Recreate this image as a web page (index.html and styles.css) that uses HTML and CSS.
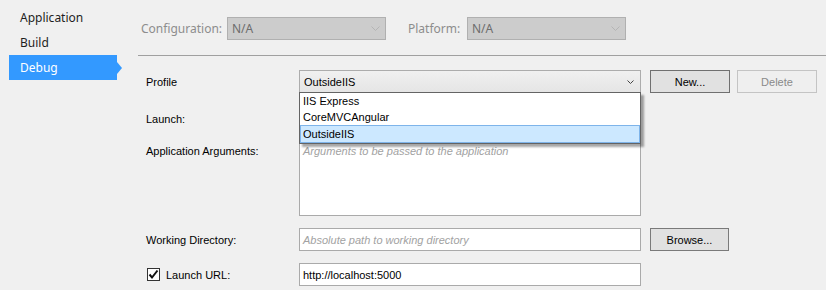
FILE: index.html
```html
<!DOCTYPE html>
<html lang="en">
<head>
    <meta charset="UTF-8">
    <title>Debug</title>
    <link rel="stylesheet" href="styles.css">
</head>
<body>
    <div class="page">
        <nav class="side">
            <div class="side-item">Application</div>
            <div class="side-item">Build</div>
            <div class="side-item active">Debug</div>
        </nav>

        <main class="main">
            <div class="toolbar">
                <span class="tool-label">Configuration:</span>
                <div class="tool-combo">
                    <span>N/A</span>
                    <svg width="9" height="5" viewBox="0 0 9 5"><polyline points="0.5,0.5 4.5,4.5 8.5,0.5" fill="none" stroke="#b4b4b4" stroke-width="1"/></svg>
                </div>
                <span class="tool-label platform">Platform:</span>
                <div class="tool-combo">
                    <span>N/A</span>
                    <svg width="9" height="5" viewBox="0 0 9 5"><polyline points="0.5,0.5 4.5,4.5 8.5,0.5" fill="none" stroke="#b4b4b4" stroke-width="1"/></svg>
                </div>
            </div>
            <div class="separator"></div>

            <div class="form">
                <div class="row row-profile">
                    <label class="label">Profile</label>
                    <div class="combo-wrap">
                        <div class="combo">
                            <span>OutsideIIS</span>
                            <svg width="7" height="4" viewBox="0 0 7 4"><polyline points="0.5,0.5 3.5,3.5 6.5,0.5" fill="none" stroke="#444" stroke-width="1"/></svg>
                        </div>
                        <ul class="dropdown">
                            <li>IIS Express</li>
                            <li>CoreMVCAngular</li>
                            <li class="selected">OutsideIIS</li>
                        </ul>
                    </div>
                    <button class="btn btn-default">New...</button>
                    <button class="btn btn-disabled">Delete</button>
                </div>

                <div class="row row-launch">
                    <label class="label">Launch:</label>
                    <div class="combo"></div>
                </div>

                <div class="row row-args">
                    <label class="label">Application Arguments:</label>
                    <div class="textarea"><span class="placeholder">Arguments to be passed to the application</span></div>
                </div>

                <div class="row row-dir">
                    <label class="label">Working Directory:</label>
                    <div class="input"><span class="placeholder">Absolute path to working directory</span></div>
                    <button class="btn btn-browse">Browse...</button>
                </div>

                <div class="row row-url">
                    <label class="label check-label">
                        <span class="checkbox">
                            <svg width="11" height="11" viewBox="0 0 11 11"><polyline points="1.5,5.5 4,8.5 9.5,1.5" fill="none" stroke="#111" stroke-width="2"/></svg>
                        </span>
                        Launch URL:
                    </label>
                    <div class="input"><span>http://localhost:5000</span></div>
                </div>
            </div>
        </main>
    </div>
</body>
</html>
```

FILE: styles.css
```css
* {
    margin: 0;
    padding: 0;
    box-sizing: border-box;
}
body {
    background-color: #f0f0f0;
    font-family: 'Liberation Sans', Arial, sans-serif;
    font-size: 11px;
    color: #000;
    overflow: hidden;
}
.page {
    display: flex;
    width: 826px;
    height: 290px;
}

/* left navigation */
.side {
    width: 130px;
    padding: 5px 0 0 9px;
    font-family: 'Noto Sans', 'Open Sans', sans-serif;
    font-size: 12px;
}
.side-item {
    position: relative;
    width: 108px;
    height: 25px;
    line-height: 25px;
    padding-left: 11px;
    color: #1e1e1e;
}
.side-item.active {
    background-color: #3399ff;
    color: #fff;
}
.side-item.active::after {
    content: '';
    position: absolute;
    right: -5px;
    top: 7px;
    border-left: 5px solid #3399ff;
    border-top: 6px solid transparent;
    border-bottom: 6px solid transparent;
}

/* main panel */
.main {
    flex: 1;
}
.toolbar {
    display: flex;
    align-items: flex-start;
    padding: 17px 0 0 11px;
    height: 55px;
    font-family: 'Noto Sans', 'Open Sans', sans-serif;
    font-size: 12px;
}
.tool-label {
    color: #8d8d8d;
    width: 86px;
    line-height: 23px;
}
.tool-label.platform {
    width: 59px;
    margin-left: 22px;
}
.tool-combo {
    display: flex;
    align-items: center;
    justify-content: space-between;
    width: 159px;
    height: 23px;
    padding: 0 5px 0 4px;
    background-color: #cccccc;
    border: 1px solid #b0b0b0;
    color: #6d6d6d;
}
.separator {
    margin-left: 8px;
    border-top: 1px solid #a0a0a0;
}

.form {
    padding-left: 16px;
}
.row {
    display: flex;
    align-items: center;
}
.label {
    width: 153px;
    flex-shrink: 0;
}
.row-profile {
    margin-top: 14px;
}
.row-launch {
    margin-top: 14px;
}
.row-args {
    margin-top: 13px;
    align-items: flex-start;
}
.row-args .label {
    padding-top: 2px;
}
.row-dir {
    margin-top: 12px;
}
.row-url {
    margin-top: 12px;
}

.combo-wrap {
    position: relative;
}
.combo {
    display: flex;
    align-items: center;
    justify-content: space-between;
    width: 342px;
    height: 23px;
    padding: 0 6px 0 4px;
    border: 1px solid #acacac;
    background: linear-gradient(#f0f0f0, #e5e5e5);
}
.dropdown {
    position: absolute;
    left: 0;
    top: 22px;
    width: 342px;
    list-style: none;
    background-color: #fff;
    border: 1px solid #646464;
    box-shadow: 3px 3px 2px rgba(0, 0, 0, 0.35);
    z-index: 2;
}
.dropdown li {
    height: 16px;
    line-height: 16px;
    padding-left: 3px;
}
.dropdown li.selected {
    height: 18px;
    line-height: 16px;
    padding-left: 2px;
    background-color: #cce8ff;
    border: 1px solid #7eb4ea;
}

.btn {
    width: 80px;
    height: 23px;
    font-family: 'Liberation Sans', Arial, sans-serif;
    font-size: 11px;
    background-color: #e1e1e1;
    border: 1px solid #adadad;
    color: #000;
}
.btn-default {
    margin-left: 9px;
    border-color: #707070;
}
.btn-disabled {
    margin-left: 7px;
    background-color: #efefef;
    border-color: #c4c4c4;
    color: #8a8a8a;
}
.btn-browse {
    margin-left: 9px;
    width: 79px;
    border-color: #7a7a7a;
}

.textarea {
    width: 342px;
    height: 73px;
    padding: 1px 3px;
    background-color: #fff;
    border: 1px solid #aaaaaa;
}
.input {
    display: flex;
    align-items: center;
    width: 342px;
    height: 23px;
    padding: 0 3px;
    background-color: #fff;
    border: 1px solid #aaaaaa;
}
.placeholder {
    color: #a2a2a2;
    font-style: italic;
}
.check-label {
    display: flex;
    align-items: center;
    gap: 6px;
    margin-left: 1px;
    width: 152px;
}
.checkbox {
    display: flex;
    align-items: center;
    justify-content: center;
    width: 13px;
    height: 13px;
    border: 1px solid #333;
    background-color: #fff;
}
```
